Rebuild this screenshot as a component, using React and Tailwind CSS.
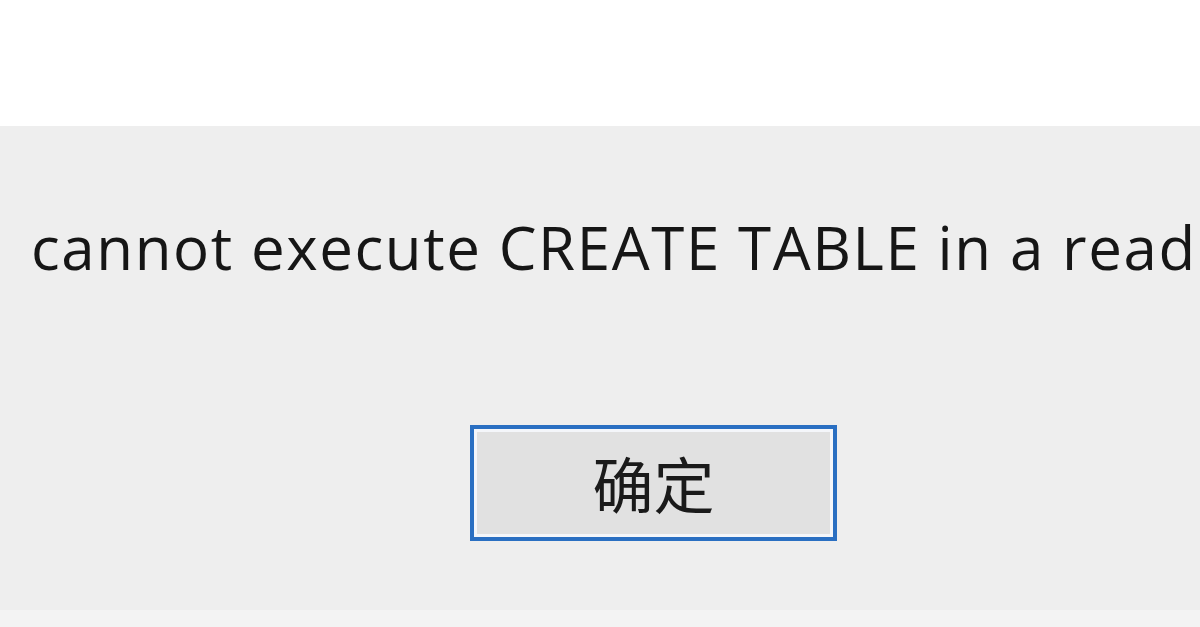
export default function App() {
  return (
    <div className="w-[1200px] h-[627px] overflow-hidden flex flex-col bg-white" style={{ fontFamily: '"Open Sans", "Noto Sans CJK SC", sans-serif' }}>
      <div className="h-[126px] bg-white shrink-0" />
      <div className="flex-1 bg-[#eeeeee] flex flex-col overflow-hidden">
        <div className="pl-[31px] pt-[81px] whitespace-nowrap text-[60px] leading-[80px] text-[#161616] tracking-[1.6px]">
          cannot execute CREATE TABLE in a read
        </div>
        <div className="flex pl-[470px] pt-[138px]">
          <div className="w-[367px] h-[116px] border-[4px] border-[#2a6fc2] p-[3px] bg-[#f4f6fa]">
            <div className="w-full h-full bg-[#e1e1e1] flex items-center justify-center text-[61px] text-[#1a1a1a]" style={{ fontFamily: '"Noto Sans CJK SC", sans-serif' }}>
              确定
            </div>
          </div>
        </div>
        <div className="flex-1" />
        <div className="h-[17px] bg-[#f3f3f3] shrink-0" />
      </div>
    </div>
  );
}
